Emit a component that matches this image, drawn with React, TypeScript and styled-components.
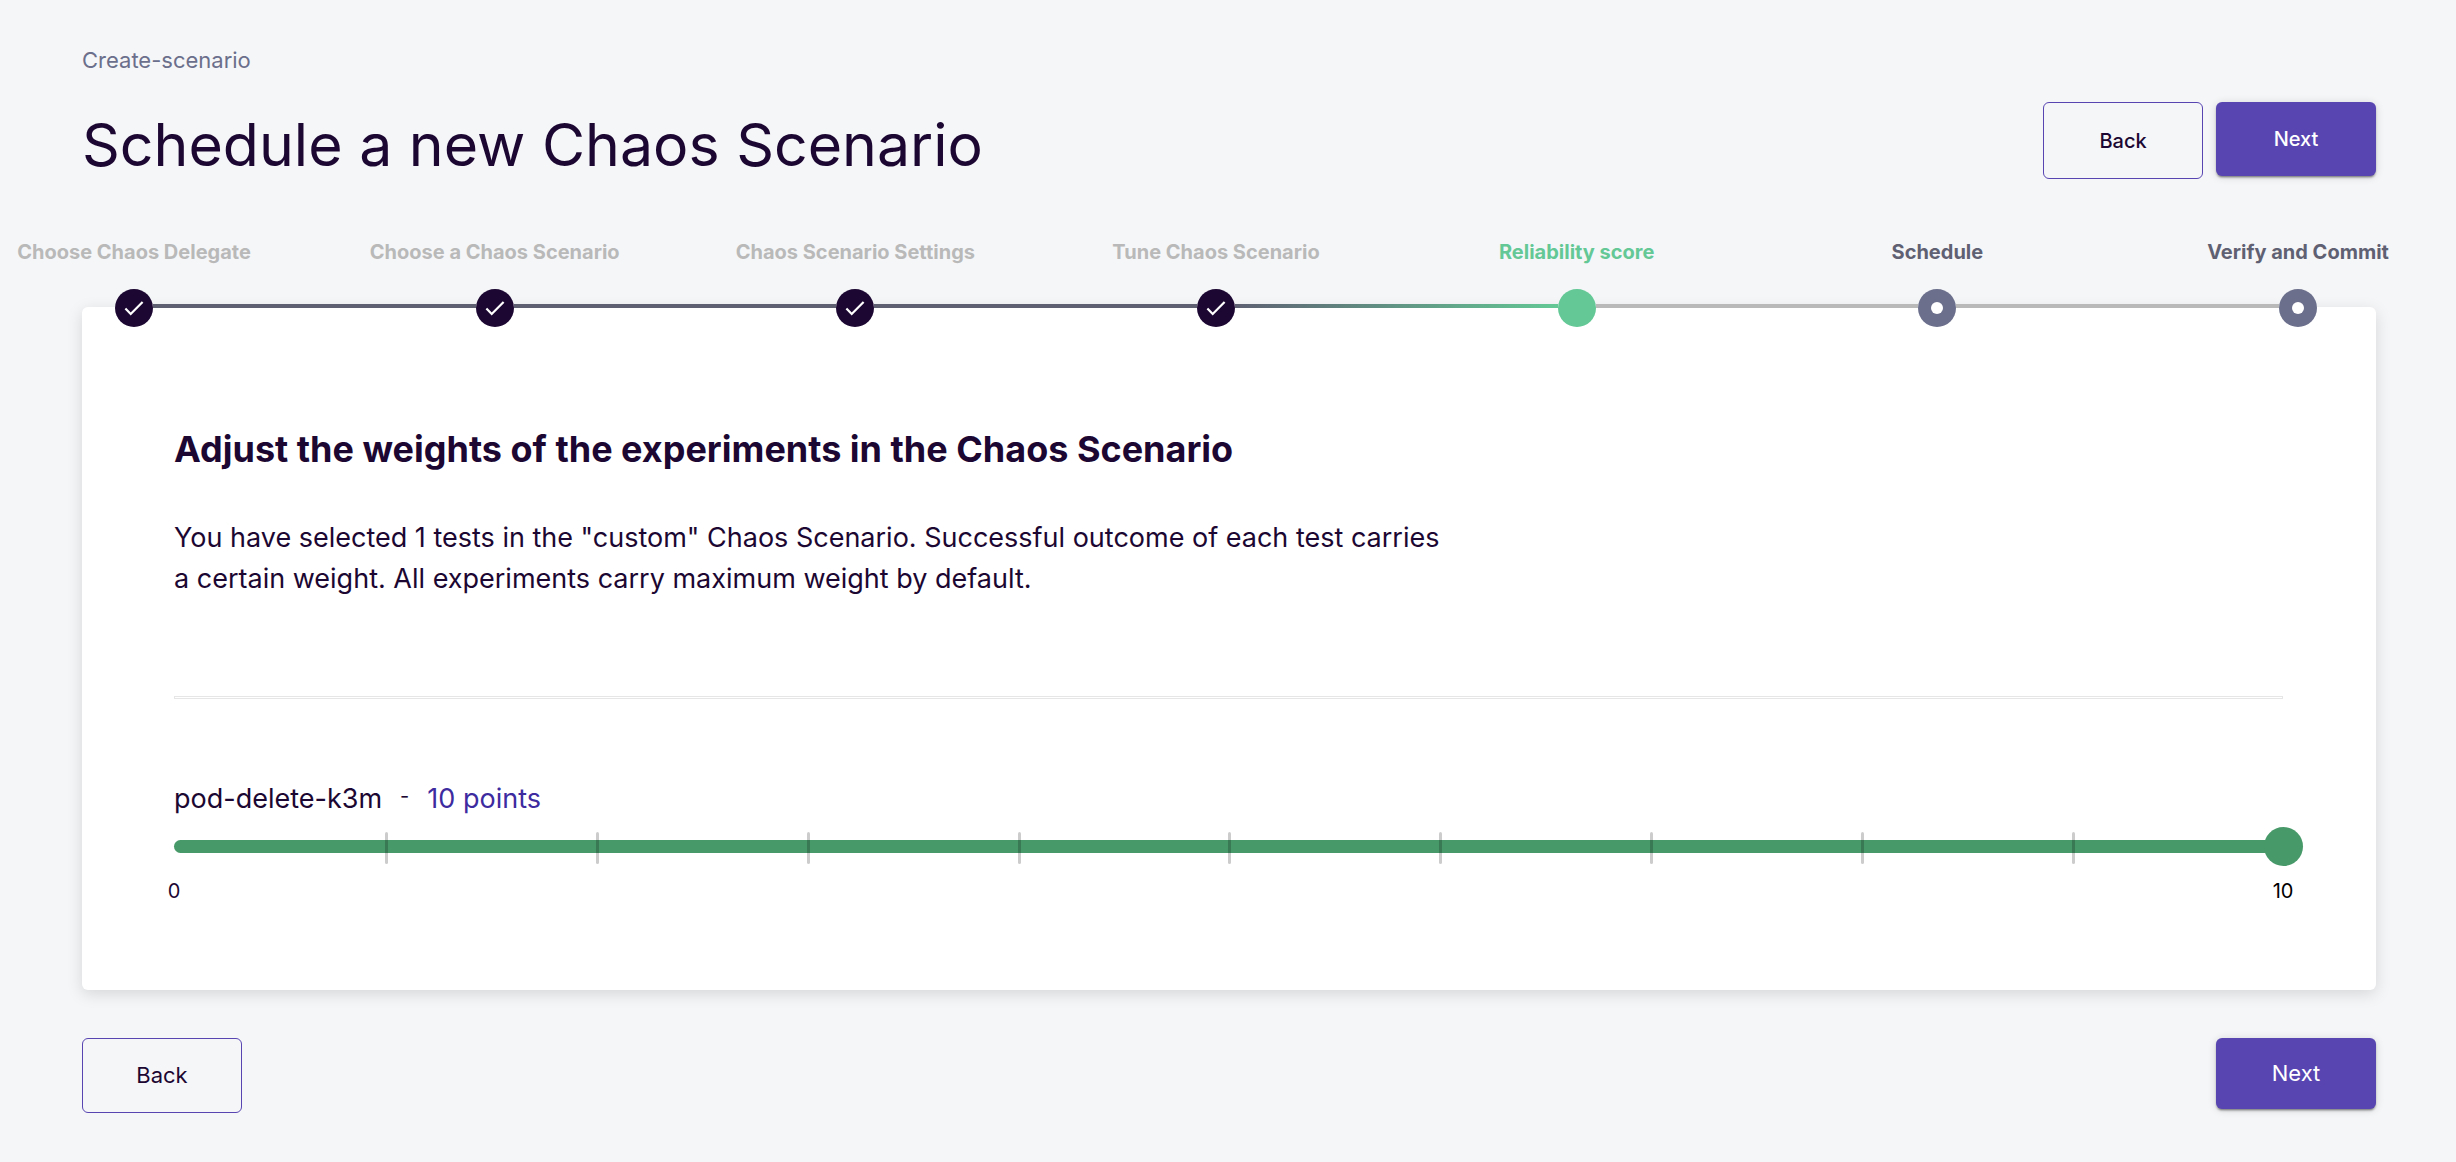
import React, { useState } from "react";
import styled, { createGlobalStyle } from "styled-components";

const color = {
  page: "#f5f6f8",
  ink: "#1c0732",
  black: "#000000",
  muted: "#6b6f8b",
  slate: "#5f6173",
  grey: "#b9b9b9",
  violet: "#5845b2",
  indigo: "#3d2b9f",
  mint: "#63c895",
  green: "#489969",
};

const GlobalStyle = createGlobalStyle`
  *, *::before, *::after { box-sizing: border-box; }
  body {
    margin: 0;
    background: ${color.page};
    color: ${color.ink};
    font-family: Inter, "Liberation Sans", sans-serif;
    font-size: 20px;
  }
`;

const Page = styled.main`
  min-height: 100vh;
  padding: 44px 80px 48px 82px;
`;

const Breadcrumb = styled.nav`
  margin-bottom: 26px;
  font-size: 22px;
  line-height: 32px;
`;

const Crumb = styled.a`
  color: ${color.muted};
  text-decoration: none;
`;

const Header = styled.header`
  display: flex;
  justify-content: space-between;
  align-items: flex-start;
  margin-bottom: 48px;
`;

const Title = styled.h1`
  margin: 0;
  font-size: 59px;
  font-weight: 400;
  line-height: 86px;
`;

const Actions = styled.div`
  display: flex;
  align-items: flex-start;
  gap: 13px;
`;

const Button = styled.button<{ $large?: boolean }>`
  width: 160px;
  padding: ${(p) => (p.$large ? "0 0 2px" : "0")};
  border: 0;
  border-radius: 6px;
  font-family: inherit;
  font-size: ${(p) => (p.$large ? 22 : 20)}px;
  font-weight: ${(p) => (p.$large ? 400 : 500)};
  cursor: pointer;
`;

const OutlineButton = styled(Button)`
  height: ${(p) => (p.$large ? 75 : 77)}px;
  border: 1px solid ${color.violet};
  background: transparent;
  color: ${color.ink};
`;

const SolidButton = styled(Button)`
  height: ${(p) => (p.$large ? 71 : 74)}px;
  background: ${color.violet};
  color: #ffffff;
  box-shadow: 0 3px 1px -2px rgba(0, 0, 0, 0.2), 0 2px 2px rgba(0, 0, 0, 0.24),
    0 1px 8px rgba(0, 0, 0, 0.14);
`;

const Stepper = styled.ol`
  position: relative;
  z-index: 1;
  display: flex;
  margin: 0 59px -20px 33px;
  padding: 0;
  list-style: none;
`;

type StepState = "done" | "active" | "todo";

const labelColor = { done: color.grey, active: color.mint, todo: color.slate };
const markerColor = { done: color.ink, active: color.mint, todo: color.muted };

const Step = styled.li`
  display: grid;
  flex: 1;
  grid-template-columns: 38px 1fr;
  row-gap: 20px;

  &:last-child {
    flex: none;
    grid-template-columns: 38px;
  }
`;

const StepLabel = styled.span<{ $state: StepState }>`
  grid-column: 1;
  justify-self: center;
  color: ${(p) => labelColor[p.$state]};
  font-weight: 700;
  line-height: 33px;
  white-space: nowrap;
`;

const Marker = styled.span<{ $state: StepState }>`
  display: flex;
  grid-row: 2;
  align-items: center;
  justify-content: center;
  height: 38px;
  border-radius: 50%;
  background: ${(p) => markerColor[p.$state]};
`;

const Dot = styled.span`
  width: 12px;
  height: 12px;
  border-radius: 50%;
  background: #ffffff;
`;

const Connector = styled.span<{ $to: StepState }>`
  grid-row: 2;
  height: 4px;
  margin-top: 15px;
  background: ${(p) =>
    p.$to === "done"
      ? color.slate
      : p.$to === "active"
        ? `linear-gradient(90deg, ${color.slate}, ${color.mint})`
        : color.grey};
`;

const Card = styled.section`
  padding: 118px 93px 84px 92px;
  border-radius: 6px;
  background: #ffffff;
  box-shadow: 0 4px 16px rgba(0, 0, 0, 0.13);
`;

const Heading = styled.h2`
  margin: 0 0 44px;
  font-size: 36px;
  font-weight: 700;
  line-height: 48px;
`;

const Description = styled.p`
  max-width: 1280px;
  margin: 0;
  font-size: 27px;
  line-height: 41px;
`;

const Divider = styled.hr`
  height: 3px;
  margin: 97px 0 79px;
  border: 1px solid #e6e6e6;
`;

const WeightLabel = styled.label`
  display: flex;
  gap: 18px;
  margin-bottom: 7px;
  font-size: 27px;
  line-height: 42px;
`;

const Dash = styled.span`
  font-size: 20px;
  line-height: 36px;
`;

const Points = styled.span`
  color: ${color.indigo};
`;

const Slider = styled.div`
  display: grid;
  grid-template-columns: minmax(0, 1fr);
  margin-bottom: 10px;

  & > * {
    grid-area: 1 / 1;
  }
`;

const Rail = styled.div`
  align-self: center;
  height: 13px;
  border-radius: 7px;
  background: #c9e4d5;
`;

const Fill = styled.div`
  height: 100%;
  border-radius: 7px;
  background: ${color.green};
`;

const Ticks = styled.div`
  display: grid;
  grid-template-columns: repeat(10, 1fr);
  height: 32px;
  margin-top: 5px;
`;

const Tick = styled.span`
  width: 3px;
  border-radius: 2px;
  background: rgba(0, 0, 0, 0.2);

  &:first-child {
    visibility: hidden;
  }
`;

const Range = styled.input`
  z-index: 1;
  appearance: none;
  width: calc(100% + 39px);
  height: 39px;
  margin: 0 -20px 0 -19px;
  background: transparent;
  cursor: pointer;

  &::-webkit-slider-thumb {
    appearance: none;
    width: 39px;
    height: 39px;
    border: 0;
    border-radius: 50%;
    background: ${color.green};
  }
`;

const Scale = styled.div`
  display: flex;
  justify-content: space-between;
  line-height: 30px;
`;

const Bound = styled.span<{ $color: string }>`
  display: flex;
  justify-content: center;
  width: 0;
  color: ${(p) => p.$color};
`;

const Footer = styled.footer`
  display: flex;
  align-items: flex-start;
  justify-content: space-between;
  margin-top: 48px;
`;

const steps: { name: string; state: StepState }[] = [
  { name: "Choose Chaos Delegate", state: "done" },
  { name: "Choose a Chaos Scenario", state: "done" },
  { name: "Chaos Scenario Settings", state: "done" },
  { name: "Tune Chaos Scenario", state: "done" },
  { name: "Reliability score", state: "active" },
  { name: "Schedule", state: "todo" },
  { name: "Verify and Commit", state: "todo" },
];

const MAX_WEIGHT = 10;

function CheckIcon() {
  return (
    <svg width="20" height="16" viewBox="0 0 20 16" fill="none" aria-hidden="true">
      <path d="M1.4 8.6 L6.7 14 L18.6 2" stroke="#ffffff" strokeWidth="2.2" />
    </svg>
  );
}

export default function App() {
  const [weight, setWeight] = useState(MAX_WEIGHT);

  return (
    <>
      <GlobalStyle />
      <Page>
        <Breadcrumb aria-label="Breadcrumb">
          <Crumb href="#create-scenario">Create-scenario</Crumb>
        </Breadcrumb>

        <Header>
          <Title>Schedule a new Chaos Scenario</Title>
          <Actions>
            <OutlineButton type="button">Back</OutlineButton>
            <SolidButton type="button">Next</SolidButton>
          </Actions>
        </Header>

        <Stepper>
          {steps.map((step, i) => (
            <Step key={step.name} aria-current={step.state === "active" ? "step" : undefined}>
              <StepLabel $state={step.state}>{step.name}</StepLabel>
              <Marker $state={step.state}>
                {step.state === "done" && <CheckIcon />}
                {step.state === "todo" && <Dot />}
              </Marker>
              {i < steps.length - 1 && <Connector $to={steps[i + 1].state} />}
            </Step>
          ))}
        </Stepper>

        <Card>
          <Heading>Adjust the weights of the experiments in the Chaos Scenario</Heading>
          <Description>
            You have selected 1 tests in the "custom" Chaos Scenario. Successful outcome of each
            test carries a certain weight. All experiments carry maximum weight by default.
          </Description>
          <Divider />
          <WeightLabel htmlFor="weight">
            <span>pod-delete-k3m</span>
            <Dash>-</Dash>
            <Points>{weight} points</Points>
          </WeightLabel>
          <Slider>
            <Rail>
              <Fill style={{ width: `${(weight / MAX_WEIGHT) * 100}%` }} />
            </Rail>
            <Ticks aria-hidden="true">
              {Array.from({ length: MAX_WEIGHT }, (_, i) => (
                <Tick key={i} />
              ))}
            </Ticks>
            <Range
              id="weight"
              type="range"
              min={0}
              max={MAX_WEIGHT}
              value={weight}
              onChange={(e) => setWeight(Number(e.target.value))}
            />
          </Slider>
          <Scale>
            <Bound $color={color.ink}>0</Bound>
            <Bound $color={color.black}>{MAX_WEIGHT}</Bound>
          </Scale>
        </Card>

        <Footer>
          <OutlineButton type="button" $large>
            Back
          </OutlineButton>
          <SolidButton type="button" $large>
            Next
          </SolidButton>
        </Footer>
      </Page>
    </>
  );
}
